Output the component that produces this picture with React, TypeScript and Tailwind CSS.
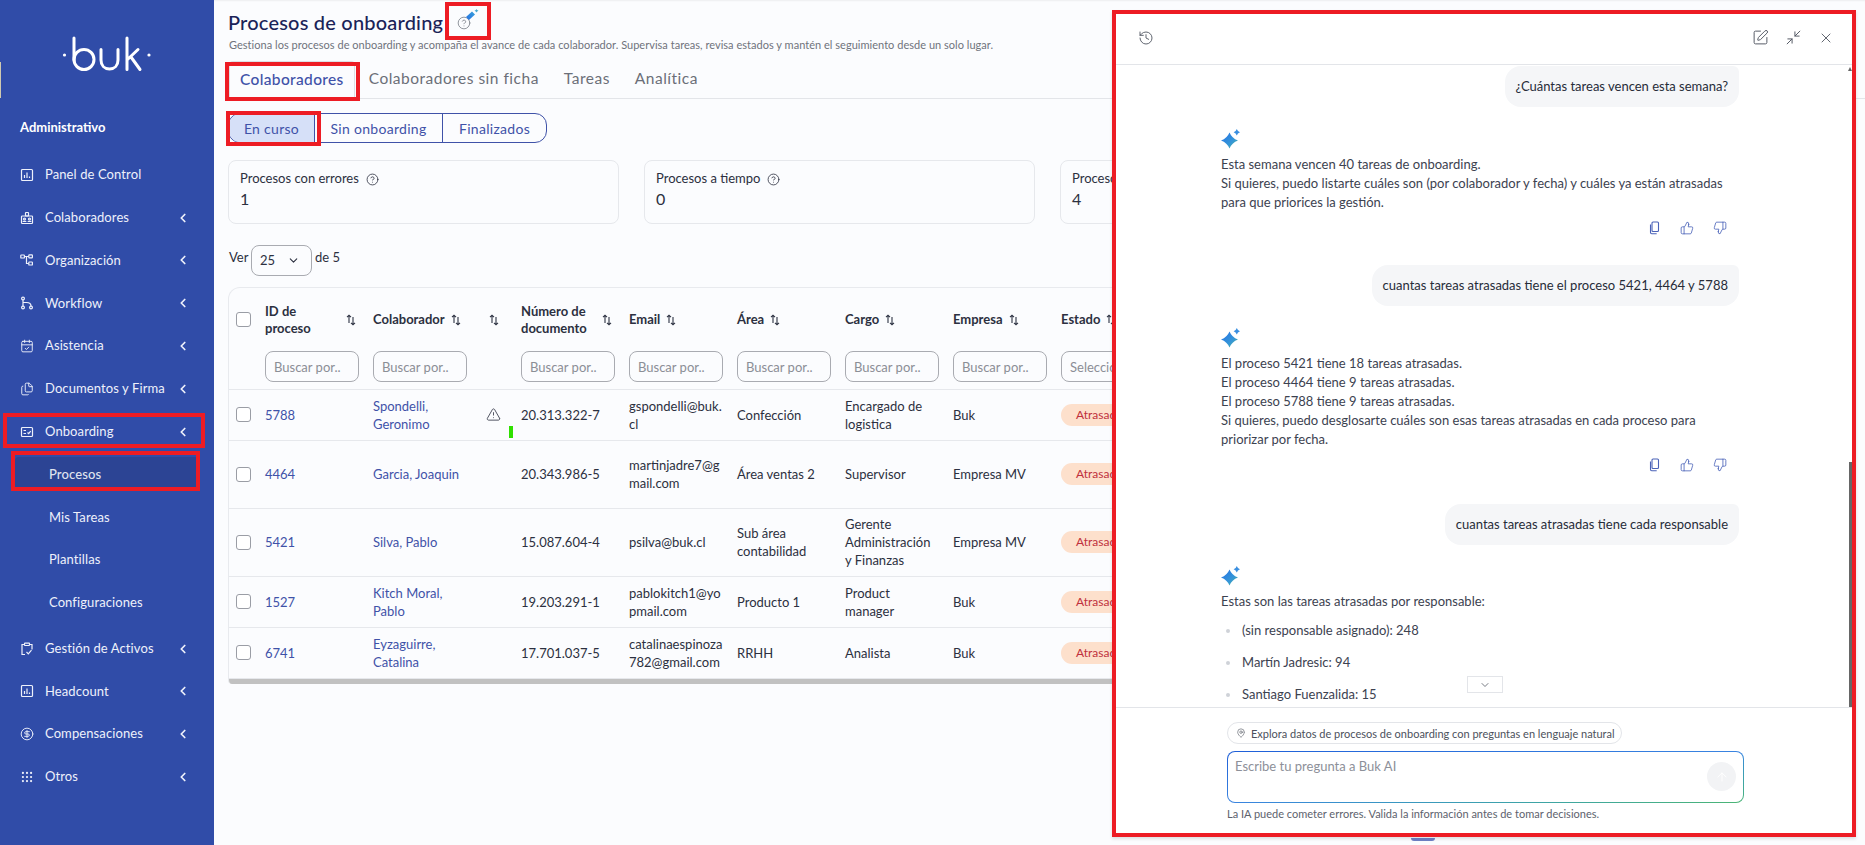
import React from "react";
import {
  ArrowUp, ChevronDown, ChevronLeft, CircleDollarSign, CircleHelp, Files, Grip,
  History, MapPin, Minimize2, SquarePen, ThumbsDown, ThumbsUp, TriangleAlert, X, CalendarCheck,
} from "lucide-react";

const ic = { width: 14, height: 14, viewBox: "0 0 14 14", fill: "none", stroke: "currentColor", strokeWidth: 1.2 };

function BoxChart() {
  return (
    <svg {...ic}>
      <rect x="1.5" y="1.5" width="11" height="11" rx="1" />
      <path d="M4.500 10V7M7 10V4.500M9.500 10V8.500" />
    </svg>
  );
}
function BoxCheck() {
  return (
    <svg {...ic}>
      <rect x="1.5" y="2.5" width="11" height="9" rx="1" />
      <path d="M3.500 5.500H6M3.500 8.500H6M7.500 7.500l1.200 1.200 2-2.600" />
    </svg>
  );
}
function People() {
  return (
    <svg {...ic}>
      <rect x="1.5" y="5" width="11" height="7.5" rx="0.8" />
      <rect x="5.5" y="1.5" width="3" height="3.5" rx="0.5" />
      <circle cx="4.5" cy="8" r="1" />
      <circle cx="9.5" cy="8" r="1" />
      <path d="M3 11c0-1 3-1 3 0M8 11c0-1 3-1 3 0" />
    </svg>
  );
}
function Org() {
  return (
    <svg {...ic}>
      <rect x="0.8" y="2" width="3.600" height="3" rx="0.6" />
      <rect x="8.800" y="1.800" width="3.600" height="3" rx="0.6" />
      <rect x="8.800" y="9" width="3.600" height="3" rx="0.6" />
      <path d="M4.400 3.500H8.800M6.500 3.500V10.500H8.800" />
    </svg>
  );
}
function Flow() {
  return (
    <svg {...ic}>
      <circle cx="3" cy="2.500" r="1.400" />
      <circle cx="3" cy="11.500" r="1.400" />
      <circle cx="11" cy="11.500" r="1.400" />
      <path d="M3 4v6M3 6.500h3.500c2.500 0 4.500 1.200 4.500 3.500" />
    </svg>
  );
}
function ClipCheck() {
  return (
    <svg {...ic}>
      <path d="M4.500 2.500H2v10h3M9.500 2.500H12v5" />
      <rect x="4.500" y="1.200" width="5" height="2.300" rx="0.5" />
      <path d="M6.500 10l1.800 1.800 3.200-3.600" />
    </svg>
  );
}
function Spark({ id, size = 20 }: { id: string; size?: number }) {
  return (
    <svg width={size} height={size} viewBox="0 0 20 20">
      <defs>
        <linearGradient id={id} x1="0" y1="0" x2="1" y2="1">
          <stop offset="0" stopColor="#2470e6" />
          <stop offset="0.6" stopColor="#3596d8" />
          <stop offset="1" stopColor="#49b58c" />
        </linearGradient>
      </defs>
      <path d="M8.500 3.500 Q10.800 9.200 17 11.500 Q10.800 13.800 8.500 19.500 Q6.200 13.800 0 11.500 Q6.200 9.200 8.500 3.500Z" fill={`url(#${id})`} />
      <path d="M15.800 0 Q16.500 2.300 19 3.200 Q16.500 4.100 15.800 6.400 Q15.100 4.100 12.600 3.200 Q15.100 2.300 15.800 0Z" fill="#3a8fe0" />
    </svg>
  );
}
function Brush() {
  return (
    <svg width="14" height="12" viewBox="0 0 14 12">
      <defs>
        <linearGradient id="brushg" x1="0" y1="1" x2="1" y2="0">
          <stop offset="0" stopColor="#2470e6" />
          <stop offset="1" stopColor="#38a0d8" />
        </linearGradient>
      </defs>
      <path d="M1 8 L7 2.500 L10 5.500 L4 11 Z" fill="url(#brushg)" />
      <path d="M11.500 0 Q11.800 1.300 13.500 1.800 Q11.800 2.300 11.500 3.600 Q11.200 2.300 9.500 1.800 Q11.200 1.300 11.500 0Z" fill="#49a8d0" />
    </svg>
  );
}
function CopyDoc() {
  return (
    <svg width="13" height="14" viewBox="0 0 13 14" fill="none" stroke="currentColor" strokeWidth="1.100">
      <rect x="4" y="1" width="6.500" height="9.500" rx="1" />
      <path d="M2.500 3.500v8a1.200 1.200 0 0 0 1.200 1.200h5" />
    </svg>
  );
}
function Sort() {
  return (
    <svg width="10" height="12" viewBox="0 0 10 12" fill="none" stroke="#2b3040" strokeWidth="1.100" className="shrink-0">
      <path d="M3 9V1.500M1 3.200 3 1.200l2 2" />
      <path d="M7 3v7.500M5 8.800l2 2 2-2" />
    </svg>
  );
}

const menuTop = [
  { label: "Panel de Control", icon: <BoxChart />, chev: false },
  { label: "Colaboradores", icon: <People />, chev: true },
  { label: "Organización", icon: <Org />, chev: true },
  { label: "Workflow", icon: <Flow />, chev: true },
  { label: "Asistencia", icon: <CalendarCheck size={14} strokeWidth={1.6} />, chev: true },
  { label: "Documentos y Firma", icon: <Files size={14} strokeWidth={1.6} />, chev: true },
  { label: "Onboarding", icon: <BoxCheck />, chev: true },
];
const menuBottom = [
  { label: "Gestión de Activos", icon: <ClipCheck /> },
  { label: "Headcount", icon: <BoxChart /> },
  { label: "Compensaciones", icon: <CircleDollarSign size={14} strokeWidth={1.6} /> },
  { label: "Otros", icon: <Grip size={14} strokeWidth={1.8} /> },
];

function MenuItem({ label, icon, chev }: { label: string; icon: React.ReactNode; chev?: boolean }) {
  return (
    <div className="flex h-[42.8px] shrink-0 items-center pl-[20px] pr-[24px] text-[13px] tracking-[0.1px] text-[#eef1fb]">
      <span className="flex w-[25px] shrink-0">{icon}</span>
      <span className="flex-1 whitespace-nowrap">{label}</span>
      {chev && <ChevronLeft size={14} strokeWidth={3} />}
    </div>
  );
}

function Sidebar() {
  return (
    <aside className="flex h-full w-[214px] shrink-0 flex-col bg-[#304ca8]">
      <div className="flex h-[108px] shrink-0 items-start justify-center pt-[36px]">
        <svg width="90" height="36" viewBox="0 0 90 36" fill="none" stroke="#fff" strokeWidth="3" strokeLinecap="round" aria-label="buk">
          <circle cx="2.5" cy="19" r="1.6" fill="#fff" stroke="none" />
          <circle cx="87" cy="19" r="1.6" fill="#fff" stroke="none" />
          <path d="M12 2V24" />
          <circle cx="22" cy="23.5" r="10" />
          <path d="M39 13.5V24c0 5.5 3.5 9 8.5 9s8.500-3.500 8.500-9V13.500" />
          <path d="M65 2V33.500M65 24 76 13.500M69 21 78 33.500" />
        </svg>
      </div>
      <div className="flex h-[40px] shrink-0 items-center pl-[20px] text-[13px] font-bold text-white">Administrativo</div>
      <div className="h-[5.5px] shrink-0" />
      {menuTop.map((m) => (
        <MenuItem key={m.label} {...m} />
      ))}
      <div className="mx-[15px] my-[4.4px] flex h-[34px] shrink-0 items-center rounded bg-[#2c4494] pl-[34px] text-[13px] font-medium tracking-[0.1px] text-[#dfe3ee]">
        Procesos
      </div>
      {["Mis Tareas", "Plantillas", "Configuraciones"].map((s) => (
        <div key={s} className="flex h-[42.8px] shrink-0 items-center pl-[49px] text-[13px] tracking-[0.1px] text-[#eef1fb]">
          {s}
        </div>
      ))}
      <div className="h-[3px] shrink-0" />
      {menuBottom.map((m) => (
        <MenuItem key={m.label} {...m} chev />
      ))}
    </aside>
  );
}

const link = "text-[#3f52a8]";
const rows = [
  { id: "5788", name: ["Spondelli,", "Geronimo"], warn: true, doc: "20.313.322-7", email: ["gspondelli@buk.", "cl"], area: ["Confección"], cargo: ["Encargado de", "logistica"], emp: "Buk", h: "h-[51px]" },
  { id: "4464", name: ["Garcia, Joaquin"], doc: "20.343.986-5", email: ["martinjadre7@g", "mail.com"], area: ["Área ventas 2"], cargo: ["Supervisor"], emp: "Empresa MV", h: "h-[68px]" },
  { id: "5421", name: ["Silva, Pablo"], doc: "15.087.604-4", email: ["psilva@buk.cl"], area: ["Sub área", "contabilidad"], cargo: ["Gerente", "Administración", "y Finanzas"], emp: "Empresa MV", h: "h-[68px]" },
  { id: "1527", name: ["Kitch Moral,", "Pablo"], doc: "19.203.291-1", email: ["pablokitch1@yo", "pmail.com"], area: ["Producto 1"], cargo: ["Product", "manager"], emp: "Buk", h: "h-[51px]" },
  { id: "6741", name: ["Eyzaguirre,", "Catalina"], doc: "17.701.037-5", email: ["catalinaespinoza", "782@gmail.com"], area: ["RRHH"], cargo: ["Analista"], emp: "Buk", h: "h-[51px]" },
];

function Lines({ l }: { l: string[] }) {
  return (
    <>
      {l.map((t) => (
        <div key={t} className="whitespace-nowrap">
          {t}
        </div>
      ))}
    </>
  );
}
function Check() {
  return <div className="ml-[7px] h-[15px] w-[15px] rounded-[3px] border border-[#9a9da5] bg-white" />;
}
function Search({ ph = "Buscar por.." }: { ph?: string }) {
  return (
    <div className="flex h-[31px] w-[94px] items-center overflow-hidden whitespace-nowrap rounded-lg border border-[#a9abb1] pl-[8px] text-[13px] font-normal text-[#8b8e96]">
      {ph}
    </div>
  );
}
function Th({ lines, wide, ph }: { lines: string[]; wide?: boolean; ph?: string }) {
  return (
    <th className="px-[7px] align-top font-bold">
      <div className={`flex h-[63px] items-center ${wide ? "justify-between pr-[3px]" : "gap-[6px]"}`}>
        <div className="leading-[17px] whitespace-nowrap">
          <Lines l={lines} />
        </div>
        <Sort />
      </div>
      <Search ph={ph} />
    </th>
  );
}

function Table() {
  return (
    <div className="mt-[11px] w-[1200px] overflow-hidden rounded-t-xl rounded-b border-x border-t border-[#e8eaee]">
      <table className="w-full table-fixed border-collapse text-left text-[13px] leading-[18px] text-[#2c3040]">
        <colgroup>
          <col className="w-[29px]" />
          <col className="w-[108px]" />
          <col className="w-[108px]" />
          <col className="w-[40px]" />
          <col className="w-[108px]" />
          <col className="w-[108px]" />
          <col className="w-[108px]" />
          <col className="w-[108px]" />
          <col className="w-[108px]" />
          <col />
        </colgroup>
        <thead>
          <tr className="h-[101px] border-b border-[#e6e8ec]">
            <th className="align-top">
              <div className="flex h-[63px] items-center">
                <Check />
              </div>
            </th>
            <Th lines={["ID de", "proceso"]} wide />
            <Th lines={["Colaborador"]} />
            <th className="align-top">
              <div className="flex h-[63px] items-center pl-[15px]">
                <Sort />
              </div>
            </th>
            <Th lines={["Número de", "documento"]} wide />
            <Th lines={["Email"]} />
            <Th lines={["Área"]} />
            <Th lines={["Cargo"]} />
            <Th lines={["Empresa"]} />
            <Th lines={["Estado"]} ph="Seleccionar" />
          </tr>
        </thead>
        <tbody>
          {rows.map((r) => (
            <tr key={r.id} className={`${r.h} border-b border-[#e6e8ec]`}>
              <td>
                <Check />
              </td>
              <td className={`px-[7px] ${link}`}>{r.id}</td>
              <td className={`px-[7px] ${link}`}>
                <Lines l={r.name} />
              </td>
              <td className="relative pl-[12px]">
                {r.warn && (
                  <>
                    <TriangleAlert size={15} strokeWidth={1.3} className="text-[#2c3040]" />
                    <span className="absolute left-[35px] top-[36px] h-[12px] w-[4px] bg-[#2fe000]" />
                  </>
                )}
              </td>
              <td className="px-[7px] whitespace-nowrap">{r.doc}</td>
              <td className="px-[7px]">
                <Lines l={r.email} />
              </td>
              <td className="px-[7px]">
                <Lines l={r.area} />
              </td>
              <td className="px-[7px]">
                <Lines l={r.cargo} />
              </td>
              <td className="px-[7px] whitespace-nowrap">{r.emp}</td>
              <td className="px-[7px]">
                <span className="inline-flex h-[22px] items-center rounded-full bg-[#fde0cc] px-[15px] text-[12px] text-[#c0303c]">
                  Atrasado
                </span>
              </td>
            </tr>
          ))}
        </tbody>
      </table>
      <div className="h-[5px] bg-[#c1c1c1]" />
    </div>
  );
}

function StatCard({ label, value }: { label: string; value: string }) {
  return (
    <div className="h-[64px] w-[391px] shrink-0 rounded-lg border border-[#e6e8ec] px-[11px] pt-[8px] text-[#2c3040]">
      <div className="flex h-[20px] items-center gap-[7px] text-[13px] whitespace-nowrap">
        {label}
        <CircleHelp size={13} strokeWidth={1.5} />
      </div>
      <div className="text-[16px] leading-[20px]">{value}</div>
    </div>
  );
}

function Main() {
  return (
    <main className="min-w-0 flex-1 overflow-hidden bg-[#fbfcfe] pl-[14px] shadow-[inset_0_2px_2px_-1px_rgba(0,0,0,0.06)]">
      <div className="flex h-[38px] items-center pt-[6px]">
        <h1 className="text-[20px] font-medium tracking-[0.2px] text-[#1a2358]">Procesos de onboarding</h1>
        <span className="relative ml-[14px] mt-[2px] flex text-[#7b7f88]">
          <CircleHelp size={14} strokeWidth={1.4} />
          <span className="absolute left-[8px] top-[-7px]">
            <Brush />
          </span>
        </span>
      </div>
      <p className="h-[14px] whitespace-nowrap pl-[1px] text-[11px] leading-[14px] tracking-[0.025px] text-[#6f737c]">
        Gestiona los procesos de onboarding y acompaña el avance de cada colaborador. Supervisa tareas, revisa estados y mantén el seguimiento desde un solo lugar.
      </p>
      <div className="mt-[9px] flex h-[38px] gap-[25px] border-b border-[#e3e5e9] pl-[1px] text-[15.5px] tracking-[0.5px] text-[#6b6f78]">
        <div className="-mr-[11px] flex h-[38px] items-center rounded-t border-x border-t border-[#dcdfe4] px-[10px] pb-[2px] font-medium tracking-[0.35px] text-[#3f52a8]">Colaboradores</div>
        <div className="flex items-center pb-[2px]">Colaboradores sin ficha</div>
        <div className="flex items-center pb-[2px]">Tareas</div>
        <div className="flex items-center pb-[2px]">Analítica</div>
      </div>
      <div className="mt-[14px] flex h-[30px] w-[319px] overflow-hidden rounded-xl border border-[#3f52a8] text-[14px] tracking-[0.3px] text-[#3f52a8]">
        <div className="flex w-[86px] items-center justify-center border-r border-[#3f52a8] bg-[#d6e0f8]">En curso</div>
        <div className="flex w-[128px] items-center justify-center border-r border-[#3f52a8]">Sin onboarding</div>
        <div className="flex flex-1 items-center justify-center">Finalizados</div>
      </div>
      <div className="mt-[17px] flex gap-[25px]">
        <StatCard label="Procesos con errores" value="1" />
        <StatCard label="Procesos a tiempo" value="0" />
        <StatCard label="Procesos atrasados" value="4" />
      </div>
      <div className="mt-[21px] flex h-[31px] items-center text-[13px] text-[#2c3040]">
        <span className="ml-[1px] -mt-[5px] w-[22px]">Ver</span>
        <div className="flex h-[31px] w-[61px] items-center justify-between rounded-lg border border-[#a9abb1] pl-[8px] pr-[11px]">
          25
          <ChevronDown size={13} strokeWidth={2} />
        </div>
        <span className="-mt-[5px] ml-[3px]">de 5</span>
      </div>
      <Table />
    </main>
  );
}

function Feedback() {
  return (
    <div className="flex h-[14px] items-center justify-end gap-[19px] pr-[12px] text-[#4a62b8]">
      <CopyDoc />
      <ThumbsUp size={14} strokeWidth={1.4} />
      <ThumbsDown size={14} strokeWidth={1.4} />
    </div>
  );
}
function Bubble({ children }: { children: React.ReactNode }) {
  return (
    <div className="flex justify-end">
      <div className="flex h-[41px] items-center rounded-2xl rounded-tr-md bg-[#f5f6f8] px-[11px] whitespace-nowrap text-[#272c38]">{children}</div>
    </div>
  );
}

function Panel() {
  return (
    <section className="absolute left-[1112px] top-[10px] flex h-[827px] w-[744px] flex-col border-4 border-[#ed1c24] bg-white text-[13px] leading-[19px] text-[#3c4250] shadow-[0_2px_3px_rgba(0,0,0,0.12)]">
      <header className="flex h-[51px] shrink-0 items-center justify-between border-b border-[#e3e5e9] pb-[3px] pl-[22px] pr-[18px] text-[#565b66]">
        <History size={16} strokeWidth={1.4} />
        <div className="flex items-center gap-[16px]">
          <SquarePen size={17} strokeWidth={1.4} />
          <Minimize2 size={17} strokeWidth={1.4} />
          <X size={16} strokeWidth={1.4} />
        </div>
      </header>
      <div className="relative min-h-0 flex-1 overflow-hidden">
        <div className="ml-[105px] w-[518px] pt-[1px]">
          <Bubble>¿Cuántas tareas vencen esta semana?</Bubble>
          <div className="mt-[22px]"><Spark id="s1" /></div>
          <div className="mt-[6px]">
            <div>Esta semana vencen 40 tareas de onboarding.</div>
            <div>Si quieres, puedo listarte cuáles son (por colaborador y fecha) y cuáles ya están atrasadas</div>
            <div>para que priorices la gestión.</div>
          </div>
          <div className="mt-[9px]"><Feedback /></div>
          <div className="mt-[30px]"><Bubble>cuantas tareas atrasadas tiene el proceso 5421, 4464 y 5788</Bubble></div>
          <div className="mt-[22px]"><Spark id="s2" /></div>
          <div className="mt-[6px]">
            <div>El proceso 5421 tiene 18 tareas atrasadas.</div>
            <div>El proceso 4464 tiene 9 tareas atrasadas.</div>
            <div>El proceso 5788 tiene 9 tareas atrasadas.</div>
            <div>Si quieres, puedo desglosarte cuáles son esas tareas atrasadas en cada proceso para</div>
            <div>priorizar por fecha.</div>
          </div>
          <div className="mt-[9px]"><Feedback /></div>
          <div className="mt-[32px]"><Bubble>cuantas tareas atrasadas tiene cada responsable</Bubble></div>
          <div className="mt-[21px]"><Spark id="s3" /></div>
          <div className="mt-[6px]">Estas son las tareas atrasadas por responsable:</div>
          <ul className="mt-[10px] flex flex-col gap-[13px]">
            {["(sin responsable asignado): 248", "Martín Jadresic: 94", "Santiago Fuenzalida: 15", "Otros responsables: 12"].map((t) => (
              <li key={t} className="flex items-center">
                <span className="ml-[5px] mr-[12px] h-[4px] w-[4px] rounded-full bg-[#cfd2d8]" />
                {t}
              </li>
            ))}
          </ul>
        </div>
        <div className="absolute left-[351px] top-[611px] flex h-[17px] w-[36px] items-center justify-center border border-[#e3e5e9] bg-white text-[#4a4f5a]">
          <ChevronDown size={12} strokeWidth={1.5} />
        </div>
        <div className="absolute right-0 top-[2px] h-0 w-0 border-x-[2px] border-b-[4px] border-x-transparent border-b-[#666]" />
        <div className="absolute right-0 top-[397px] bottom-0 w-[3px] bg-[#666]" />
      </div>
      <footer className="h-[126px] shrink-0 border-t border-[#e3e5e9] pl-[111px] pt-[14px]">
        <div className="flex h-[22px] w-[395px] items-center gap-[5px] rounded-full border border-[#e3e5e9] pl-[8px] text-[11px] whitespace-nowrap text-[#4c515c]">
          <MapPin size={10} strokeWidth={1.4} />
          Explora datos de procesos de onboarding con preguntas en lenguaje natural
        </div>
        <div className="mt-[7px] h-[52px] w-[517px] rounded-lg bg-gradient-to-br from-[#1f5fd8] via-[#3a84e0] to-[#4cb573] p-px">
          <div className="flex h-full items-start justify-between rounded-[7px] bg-white pl-[7px] pr-[7px] pt-[5px] text-[#8d9099]">
            Escribe tu pregunta a Buk AI
            <span className="mt-[5px] flex h-[29px] w-[29px] items-center justify-center rounded-full bg-[#f2f3f5] text-white">
              <ArrowUp size={14} strokeWidth={1.5} />
            </span>
          </div>
        </div>
        <p className="mt-[1px] text-[11px] text-[#5d626d]">La IA puede cometer errores. Valida la información antes de tomar decisiones.</p>
      </footer>
    </section>
  );
}

function Mark({ className }: { className: string }) {
  return <div className={`absolute border-4 border-[#ed1c24] ${className}`} />;
}

export default function App() {
  return (
    <div className="relative flex h-[845px] w-[1865px] overflow-hidden font-['Lato',sans-serif]">
      <Sidebar />
      <Main />
      <Panel />
      <div className="absolute left-0 top-[62px] h-[36px] w-[1px] bg-[#cfc9b0]" />
      <div className="absolute left-[1411px] top-[838px] h-[3px] w-[24px] rounded-b-full bg-[#3048a8] opacity-70" />
      <Mark className="left-[445px] top-[2px] h-[38px] w-[46px]" />
      <Mark className="left-[225px] top-[62px] h-[39px] w-[135px]" />
      <Mark className="left-[226px] top-[111px] h-[35px] w-[95px]" />
      <Mark className="left-[3px] top-[413px] h-[35px] w-[202px]" />
      <Mark className="left-[11px] top-[451px] h-[40px] w-[189px]" />
    </div>
  );
}
